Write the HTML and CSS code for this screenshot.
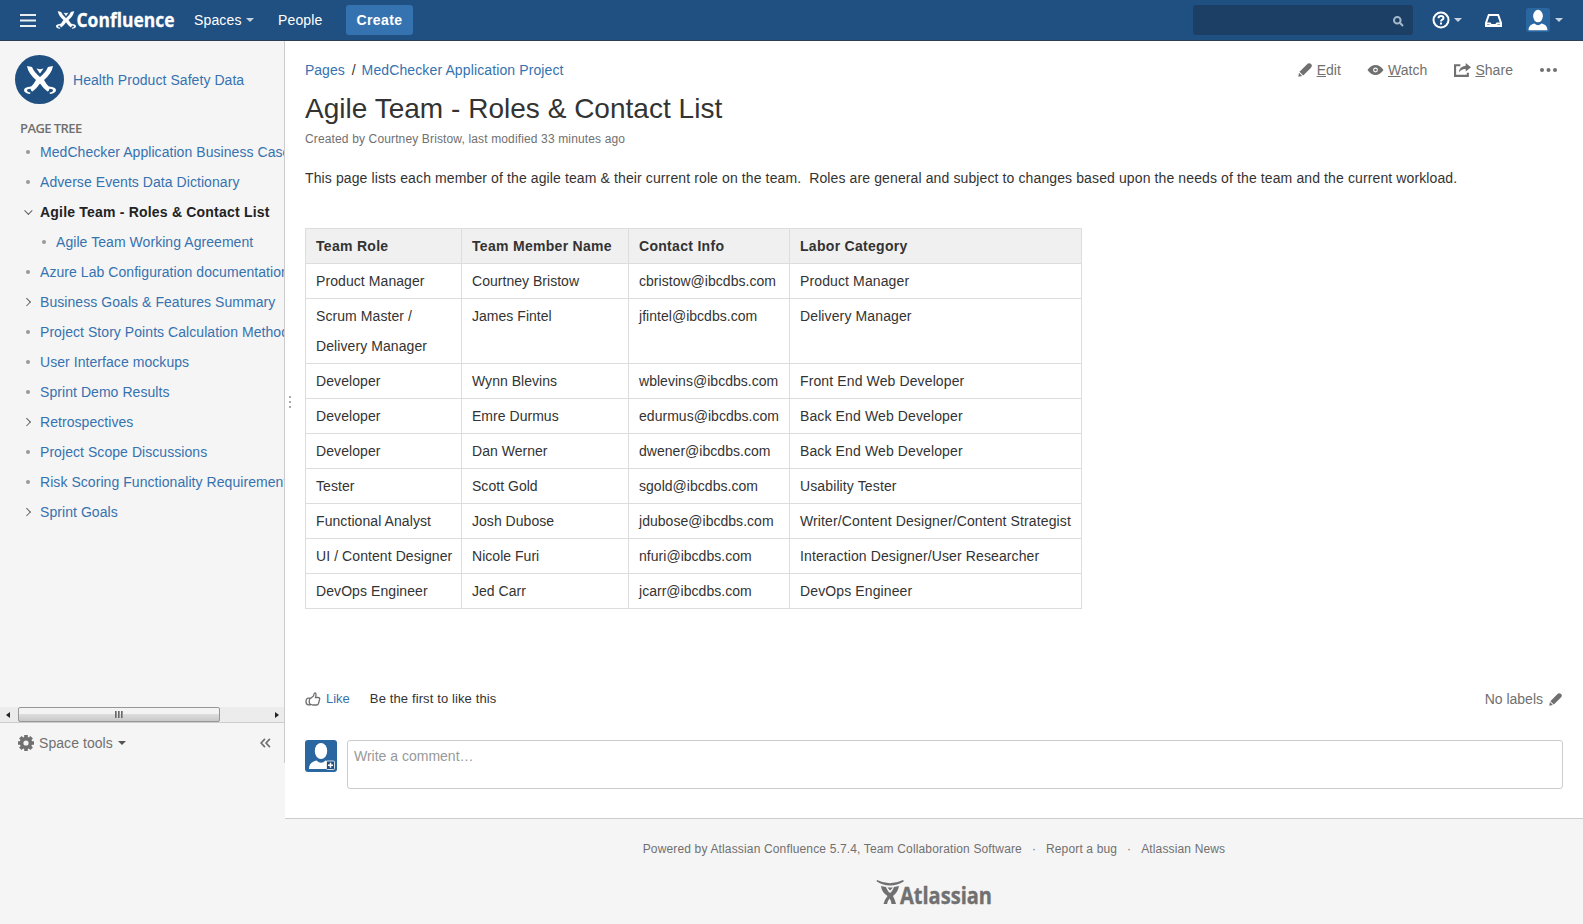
FILE: index.html
```html
<!DOCTYPE html>
<html lang="en">
<head>
<meta charset="utf-8">
<title>Agile Team - Roles &amp; Contact List</title>
<link rel="stylesheet" href="styles.css">
</head>
<body>
<svg class="defs" width="0" height="0">
  <symbol id="pencil" viewBox="0 0 14 14"><path d="M.3 13.700 1 9.800 4.200 13ZM1.500 8.800 8.600 1.700Q11-.7 13 1T12.300 5.400L5.200 12.500Z"/></symbol>
  <symbol id="user" viewBox="0 0 32 32"><ellipse cx="16" cy="11" rx="6.2" ry="8"/><path d="M4 29C4 23 8 21.5 11.5 20.5Q16 25 20.500 20.500C24 21.500 28 23 28 29Z"/></symbol>
  <symbol id="charlie" viewBox="0 0 32 28"><path d="M3 0 8 1Q10 6 16 11Q22 6 24 1L29 0Q28 7 20 14Q23 19 25 20.500Q32 21 32 24T26 28L25.500 26.500Q29 26 29 24.500T25.500 22.800Q25 25.500 23.500 25.500Q19 22 16 17.500Q13 22 8.500 25.500Q7 25.500 6.500 22.800Q3 23 3 24.500T6.500 26.500L6 28Q0 27 0 24T7 20.500Q9 19 12 14Q4 7 3 0Z"/><path d="M12.500 2.500 16 3.300 19.500 2.500 16 7.500Z"/></symbol>
</svg>

<header class="topbar">
  <svg class="menu" viewBox="0 0 16 13"><path d="M0 1H16M0 6.500H16M0 12H16"/></svg>
  <svg class="brand" viewBox="0 0 120 24"><use href="#charlie" x="1" y="4" width="20" height="18"/><text x="21.500" y="19.500" textLength="98" lengthAdjust="spacingAndGlyphs">Confluence</text></svg>
  <a class="nav spaces">Spaces<i class="caret"></i></a>
  <a class="nav people">People</a>
  <button class="create">Create</button>
  <div class="search"><svg viewBox="0 0 11 11"><circle cx="4.300" cy="4.300" r="3.300"/><path d="M6.800 6.800 10 10"/></svg></div>
  <svg class="help" viewBox="0 0 18 18"><circle cx="9" cy="9" r="7.500"/><path d="M6.500 7.300Q6.500 5 9 5T11.500 7Q11.500 8 10.300 8.700Q9 9.400 9 10.500M9 11.600V13.400"/></svg><i class="caret help-caret"></i>
  <svg class="tray" viewBox="0 0 17 13"><path d="M3.800 1H13.200L16 9V12H1V9ZM1.300 9.500H5L6 11H11L12 9.500H15.700"/></svg>
  <span class="me"><svg viewBox="3 2 26 28"><use href="#user" width="32" height="32"/></svg></span><i class="caret"></i>
</header>

<div class="body">
  <aside class="sidebar">
    <div class="space"><span class="space-logo"><svg><use href="#charlie"/></svg></span><a>Health Product Safety Data</a></div>
    <h5>PAGE TREE</h5>
    <ul class="tree">
      <li><i class="dot"></i><a>MedChecker Application Business Case</a></li>
      <li><i class="dot"></i><a>Adverse Events Data Dictionary</a></li>
      <li><i class="chev down"></i><a class="current">Agile Team - Roles &amp; Contact List</a></li>
      <li class="child"><i class="dot"></i><a>Agile Team Working Agreement</a></li>
      <li><i class="dot"></i><a>Azure Lab Configuration documentation</a></li>
      <li><i class="chev"></i><a>Business Goals &amp; Features Summary</a></li>
      <li><i class="dot"></i><a>Project Story Points Calculation Method</a></li>
      <li><i class="dot"></i><a>User Interface mockups</a></li>
      <li><i class="dot"></i><a>Sprint Demo Results</a></li>
      <li><i class="chev"></i><a>Retrospectives</a></li>
      <li><i class="dot"></i><a>Project Scope Discussions</a></li>
      <li><i class="dot"></i><a>Risk Scoring Functionality Requirements</a></li>
      <li><i class="chev"></i><a>Sprint Goals</a></li>
    </ul>
    <div class="scroll">
      <svg class="arrow" viewBox="0 0 4 6"><path d="M4 0V6L0 3Z"/></svg>
      <div class="thumb"><i></i><i></i><i></i></div>
      <svg class="arrow right" viewBox="0 0 4 6"><path d="M0 0V6L4 3Z"/></svg>
    </div>
    <div class="tools">
      <svg class="gear" viewBox="0 0 16 16"><circle cx="8" cy="8" r="4.400"/><path d="M8 0V3.500M8 12.500V16M0 8H3.500M12.500 8H16M2.340 2.340 4.800 4.800M11.200 11.200 13.660 13.660M13.660 2.340 11.200 4.800M4.800 11.200 2.340 13.660"/></svg>
      <span>Space tools</span><i class="caret dark"></i>
      <svg class="collapse" viewBox="0 0 10 9"><path d="M4.500.7 1 4.500 4.500 8.300M9 .7 5.500 4.500 9 8.300"/></svg>
    </div>
  </aside>
  <div class="grip"><i></i><i></i><i></i></div>

  <div class="page">
    <main class="content">
      <div class="crumbs">
        <a class="c1">Pages</a><span class="slash">/</span><a class="c2">MedChecker Application Project</a>
        <nav class="actions">
          <a class="edit"><svg viewBox="0 0 14 14"><use href="#pencil"/></svg><span><u>E</u>dit</span></a>
          <a class="watch"><svg viewBox="0 0 16 10"><path fill-rule="evenodd" d="M0 5Q3.500 0 8 0T16 5Q12.500 10 8 10T0 5ZM8 2.600A2.400 2.400 0 1 0 8 7.400A2.400 2.400 0 1 0 8 2.600Z"/><circle cx="8" cy="5" r="1.300"/></svg><span><u>W</u>atch</span></a>
          <a class="share"><svg viewBox="0 0 16 13"><path class="line" d="M6 2H1V12H13V9"/><path d="M11 0 16 4 11 8V5.500Q7 5.200 4.500 9Q5 3 11 2.500Z"/></svg><span><u>S</u>hare</span></a>
          <svg class="more" viewBox="0 0 17 4"><circle cx="2" cy="2" r="2"/><circle cx="8.500" cy="2" r="2"/><circle cx="15" cy="2" r="2"/></svg>
        </nav>
      </div>
      <h1>Agile Team - Roles &amp; Contact List</h1>
      <p class="meta">Created by Courtney Bristow, last modified 33 minutes ago</p>
      <p class="intro">This page lists each member of the agile team &amp; their current role on the team.&nbsp; Roles are general and subject to changes based upon the needs of the team and the current workload.</p>
      <table>
        <colgroup><col class="w1"><col class="w2"><col class="w3"><col class="w4"></colgroup>
        <tr><th>Team Role</th><th>Team Member Name</th><th>Contact Info</th><th>Labor Category</th></tr>
        <tr><td>Product Manager</td><td>Courtney Bristow</td><td>cbristow@ibcdbs.com</td><td>Product Manager</td></tr>
        <tr><td><p>Scrum Master /</p><p>Delivery Manager</p></td><td>James Fintel</td><td>jfintel@ibcdbs.com</td><td>Delivery Manager</td></tr>
        <tr><td>Developer</td><td>Wynn Blevins</td><td>wblevins@ibcdbs.com</td><td>Front End Web Developer</td></tr>
        <tr><td>Developer</td><td>Emre Durmus</td><td>edurmus@ibcdbs.com</td><td>Back End Web Developer</td></tr>
        <tr><td>Developer</td><td>Dan Werner</td><td>dwener@ibcdbs.com</td><td>Back End Web Developer</td></tr>
        <tr><td>Tester</td><td>Scott Gold</td><td>sgold@ibcdbs.com</td><td>Usability Tester</td></tr>
        <tr><td>Functional Analyst</td><td>Josh Dubose</td><td>jdubose@ibcdbs.com</td><td>Writer/Content Designer/Content Strategist</td></tr>
        <tr><td>UI / Content Designer</td><td>Nicole Furi</td><td>nfuri@ibcdbs.com</td><td>Interaction Designer/User Researcher</td></tr>
        <tr><td>DevOps Engineer</td><td>Jed Carr</td><td>jcarr@ibcdbs.com</td><td>DevOps Engineer</td></tr>
      </table>
      <div class="likes">
        <svg class="thumbup" viewBox="0 0 16 14"><path d="M5.500 6.500 8.500 4Q9 1 10 .8T11 3.500L10.500 5.500H13Q15 5.500 14.600 7.500L13.500 11.500Q13 13 11.500 13H8L5 12M3.500 6.200Q1 6.200 1 9.500T3.500 12.800H5Q3.500 9.500 5 6.200Z"/></svg>
        <a>Like</a><span class="first">Be the first to like this</span>
        <span class="labels">No labels</span><svg class="label-pencil" viewBox="0 0 14 14"><use href="#pencil"/></svg>
      </div>
      <div class="comment">
        <span class="avatar"><svg viewBox="0 0 32 32"><use href="#user"/><rect class="badge" x="21.500" y="21" width="8" height="8.500" rx="1"/><path class="plus" d="M25.500 22.800V27.800M23 25.300H28"/></svg></span>
        <div class="box">Write a comment…</div>
      </div>
    </main>
    <footer>
      <div class="links"><span>Powered by Atlassian Confluence 5.7.4, Team Collaboration Software</span><b>·</b><span>Report a bug</span><b>·</b><span>Atlassian News</span></div>
      <svg class="atlassian" viewBox="0 0 115 26"><path d="M0 0Q13 6.500 26 0L27 1.200Q13 10 -.5 1.200Z"/><path d="M4 6 9 7Q11 12 13 13Q15 12 17 7L22 6Q21 12 16 16Q18 20 19 24H14.500Q14.500 21 12.500 18.500Q10.500 21 10 24H6.500Q8 19 10.500 16Q4.500 12 4 6Z"/><path d="M10.500 7.500H16L13 10.500Z"/><text x="23" y="24" textLength="92" lengthAdjust="spacingAndGlyphs">Atlassian</text></svg>
    </footer>
  </div>
</div>
</body>
</html>
```
FILE: styles.css
```css
* { box-sizing: border-box; }
body { margin: 0; height: 924px; overflow: hidden; background: #f5f5f5; color: #333; font: 14px/20px "Liberation Sans", Arial, sans-serif; }
h1, h5, p, ul { margin: 0; padding: 0; }
svg { display: block; flex: none; }
a { color: #3572b0; }
.defs { position: absolute; }

.topbar { display: flex; align-items: center; height: 41px; padding-left: 20px; background: #205081; border-bottom: 1px solid #2e3d54; color: #fff; }
.menu { width: 16px; height: 13px; stroke: #e9eef3; stroke-width: 2; }
.brand { width: 120px; height: 24px; margin: 0 0 2px 19px; overflow: visible; fill: #fff; font: bold 20px "Open Sans", sans-serif; stroke: #fff; stroke-width: .3; }
.nav { display: flex; align-items: center; color: #fff; letter-spacing: .15px; }
.spaces { width: 84px; margin-left: 19px; }
.people { width: 68px; }
.caret { width: 0; height: 0; margin-left: 6px; border: 4px solid transparent; border-top-color: #c7d3df; border-bottom: 0; }
.spaces .caret { margin-left: 4px; }
.caret.dark { margin-left: 5px; border-top-color: #555; }
.create { width: 67px; height: 30px; padding: 0; border: 0; border-radius: 3px; background: #3572b0; color: #fff; font: bold 14px "Liberation Sans", sans-serif; letter-spacing: .4px; }
.search { display: flex; justify-content: flex-end; width: 220px; height: 30px; margin-left: auto; padding: 11px 9px 0 0; border-radius: 3px; background: #1c3f65; }
.search svg { width: 11px; height: 11px; fill: none; stroke: #a5b8cb; stroke-width: 2; }
.help { width: 18px; height: 18px; margin-left: 19px; fill: none; stroke: #fff; stroke-width: 2; }
.help-caret { margin-left: 4px; }
.tray { width: 17px; height: 13px; margin-left: 23px; fill: none; stroke: #fff; stroke-width: 2; }
.me { width: 24px; height: 24px; margin-left: 24px; padding: 1px; border-radius: 3px; background: #2a67a0; fill: #fff; }
.me svg { width: 22px; height: 22px; }
.me + .caret { margin: 0 20px 0 5px; }

.body { display: flex; height: 883px; }
.sidebar { display: flex; flex-direction: column; width: 285px; height: 722px; border-right: 1px solid #ccc; overflow: hidden; }
.space { display: flex; align-items: center; gap: 9px; margin: 14px 0 0 15px; white-space: nowrap; letter-spacing: .06px; }
.space-logo { display: grid; place-items: center; width: 49px; height: 49px; border-radius: 50%; background: #205081; fill: #fff; }
.space-logo svg { width: 32px; height: 28px; }
h5 { margin: 14px 0 1px 20px; color: #707070; font: 600 13px/20px "Open Sans", sans-serif; letter-spacing: -.58px; }
.tree { list-style: none; margin-top: -2px; letter-spacing: .06px; }
.tree li { display: flex; align-items: center; height: 30px; padding-left: 20px; margin: 0; white-space: nowrap; }
.tree .child { padding-left: 36px; }
.tree li a { flex: none; }
.tree .current { color: #222; font-weight: bold; letter-spacing: .2px; }
.dot { flex: none; width: 4px; height: 4px; margin: 0 10px 0 6px; border-radius: 50%; background: #999; }
.chev { flex: none; width: 5.5px; height: 5.5px; margin: 0 10.5px 0 4px; border: solid #606060; border-width: 1.5px 1.5px 0 0; transform: rotate(45deg); }
.chev.down { margin: 0 9px 0 5.5px; transform: translateY(-1px) rotate(135deg); }
.scroll { display: flex; align-items: center; height: 16px; margin-top: auto; border-bottom: 1px solid #ccc; background: #ececec; }
.arrow { width: 4px; height: 6px; margin: 0 8px 0 6px; fill: #222; }
.arrow.right { margin: 0 5px 0 auto; }
.thumb { display: flex; justify-content: center; align-items: center; gap: 1px; width: 202px; height: 15px; border: 1px solid #979797; border-radius: 2px; background: linear-gradient(#f3f3f3 0 45%, #dcdcdc 50%, #c9c9c9); }
.thumb i { width: 2px; height: 7px; background: linear-gradient(90deg, #555, #aaa); }
.tools { display: flex; align-items: center; height: 40px; padding: 0 13px 0 18px; color: #707070; letter-spacing: .06px; }
.gear { width: 16px; height: 16px; margin-right: 5px; fill: none; stroke: #707070; stroke-width: 3.600; }
.collapse { width: 11px; height: 10px; margin-left: auto; fill: none; stroke: #707070; stroke-width: 1.500; }
.grip { position: absolute; left: 289px; top: 396px; display: grid; gap: 3px; }
.grip i { width: 2px; height: 2px; background: #aaa; }

.page { flex: 1; display: flex; flex-direction: column; }
.content { height: 778px; padding: 19px 20px 0; background: #fff; border-bottom: 1px solid #ccc; }
.crumbs { display: flex; }
.c2 { letter-spacing: .12px; }
.slash { margin: 0 6px 0 7px; }
.actions { display: flex; align-items: center; margin-left: auto; padding-right: 6px; color: #707070; fill: #707070; letter-spacing: .05px; }
.actions a { display: flex; align-items: center; color: #707070; }
.edit svg { width: 14px; height: 14px; margin-right: 5px; }
.watch { margin-left: 26px; }
.watch svg { width: 17px; height: 10px; margin-right: 4px; }
.share { margin-left: 27px; }
.share svg { width: 17px; height: 14px; margin-right: 4px; }
.share span { margin-right: 1px; }
.line { fill: none; stroke: #707070; stroke-width: 2; }
.more { width: 17px; height: 4px; margin-left: 26px; }
h1 { margin-top: 11px; font-size: 28px; line-height: 35px; font-weight: normal; letter-spacing: .02px; }
.meta { margin-top: 3px; color: #707070; font-size: 12px; line-height: 20px; letter-spacing: .14px; }
.intro { margin-top: 19px; white-space: nowrap; letter-spacing: .115px; }
table { margin-top: 40px; width: 777px; table-layout: fixed; border-collapse: collapse; }
.w1 { width: 156px; } .w2 { width: 167px; } .w3 { width: 161px; }
th, td { height: 35px; padding: 7px 10px; border: 1px solid #ddd; text-align: left; vertical-align: top; white-space: nowrap; letter-spacing: .12px; }
td:nth-child(1) { letter-spacing: .08px; }
td:nth-child(2), td:nth-child(3) { letter-spacing: .03px; }
th { background: #f0f0f0; letter-spacing: .3px; }
td p + p { margin-top: 10px; }
.likes { display: flex; align-items: center; height: 20px; margin-top: 80px; font-size: 13px; }
.thumbup { width: 16px; height: 14px; margin-right: 5px; fill: none; stroke: #707070; stroke-width: 1.300; }
.first { margin-left: 20px; letter-spacing: .12px; }
.labels { margin-left: auto; color: #707070; font-size: 14px; }
.label-pencil { width: 13px; height: 13px; margin: 0 1px 0 6px; fill: #707070; }
.comment { display: flex; gap: 10px; margin-top: 31px; }
.avatar, .avatar svg { width: 32px; height: 32px; }
.avatar { border-radius: 3px; background: #2a67a0; fill: #fff; }
.badge { fill: #205081; stroke: #fff; stroke-width: .8; }
.plus { stroke: #fff; stroke-width: 1.500; }
.box { flex: 1; height: 49px; padding: 5px 6px; border: 1px solid #ccc; border-radius: 3px; line-height: 20px; color: #999; }
footer { display: flex; flex-direction: column; align-items: center; padding-top: 20px; color: #707070; }
.links { display: flex; font-size: 12px; letter-spacing: .15px; }
.links b { width: 24px; text-align: center; font-weight: normal; }
.atlassian { width: 115px; height: 26px; margin: 21px 0 0 1px; overflow: visible; fill: #707070; font: bold 24px "Open Sans", sans-serif; }
.atlassian text { stroke: #707070; stroke-width: .4; }
```
